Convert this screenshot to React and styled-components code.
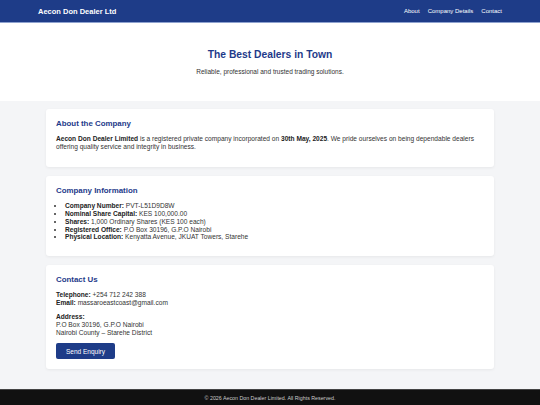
import React from "react";
import styled, { createGlobalStyle } from "styled-components";

const GlobalStyle = createGlobalStyle`
  * {
    box-sizing: border-box;
  }

  body {
    margin: 0;
    font-family: "Liberation Sans", Arial, sans-serif;
    background: #f4f5f7;
    color: #333333;
  }
`;

function App() {
  return (
    <>
      <GlobalStyle />
      <Page>
        <NavBar>
          <NavInner>
            <Brand>Aecon Don Dealer Ltd</Brand>
            <NavLinks>
              <NavLink href="#about">About</NavLink>
              <NavLink href="#details">Company Details</NavLink>
              <NavLink href="#contact">Contact</NavLink>
            </NavLinks>
          </NavInner>
        </NavBar>

        <Hero>
          <HeroTitle>The Best Dealers in Town</HeroTitle>
          <HeroText>Reliable, professional and trusted trading solutions.</HeroText>
        </Hero>

        <Main>
          <Card id="about">
            <CardTitle>About the Company</CardTitle>
            <Text>
              <b>Aecon Don Dealer Limited</b> is a registered private company
              incorporated on <b>30th May, 2025</b>. We pride ourselves on being
              dependable dealers offering quality service and integrity in
              business.
            </Text>
          </Card>

          <Card id="details">
            <CardTitle>Company Information</CardTitle>
            <InfoList>
              <li>
                <b>Company Number:</b> PVT-L51D9D8W
              </li>
              <li>
                <b>Nominal Share Capital:</b> KES 100,000.00
              </li>
              <li>
                <b>Shares:</b> 1,000 Ordinary Shares (KES 100 each)
              </li>
              <li>
                <b>Registered Office:</b> P.O Box 30196, G.P.O Nairobi
              </li>
              <li>
                <b>Physical Location:</b> Kenyatta Avenue, JKUAT Towers, Starehe
              </li>
            </InfoList>
          </Card>

          <Card id="contact">
            <CardTitle>Contact Us</CardTitle>
            <Text>
              <b>Telephone:</b> +254 712 242 388
              <br />
              <b>Email:</b> massaroeastcoast@gmail.com
            </Text>
            <Text>
              <b>Address:</b>
              <br />
              P.O Box 30196, G.P.O Nairobi
              <br />
              Nairobi County – Starehe District
            </Text>
            <Button>Send Enquiry</Button>
          </Card>
        </Main>

        <Footer>© 2026 Aecon Don Dealer Limited. All Rights Reserved.</Footer>
      </Page>
    </>
  );
}

const Page = styled.div`
  min-height: 100vh;
  display: flex;
  flex-direction: column;
`;

const NavBar = styled.header`
  background: #1e3c88;
  height: 23px;
  border-bottom: 1px solid #8ea2cf;
`;

const NavInner = styled.div`
  width: 464px;
  height: 100%;
  margin: 0 auto;
  display: flex;
  align-items: center;
  justify-content: space-between;
`;

const Brand = styled.div`
  color: #ffffff;
  font-size: 7.5px;
  font-weight: 700;
`;

const NavLinks = styled.nav`
  display: flex;
  gap: 8px;
`;

const NavLink = styled.a`
  color: #ffffff;
  font-size: 6px;
  text-decoration: none;
`;

const Hero = styled.section`
  background: #ffffff;
  height: 78px;
  display: flex;
  flex-direction: column;
  align-items: center;
  justify-content: center;
`;

const HeroTitle = styled.h1`
  margin: 0 0 8px;
  color: #1e3a8a;
  font-size: 10.3px;
  font-weight: 700;
`;

const HeroText = styled.p`
  margin: 0;
  font-size: 6.5px;
  color: #333333;
`;

const Main = styled.main`
  flex: 1;
  width: 448px;
  margin: 0 auto;
  padding: 8px 0 17px;
  display: flex;
  flex-direction: column;
  gap: 9px;
`;

const Card = styled.section`
  background: #ffffff;
  border-radius: 3px;
  box-shadow: 0 1px 3px rgba(0, 0, 0, 0.06);
  padding: 10px 10px 10px;
`;

const CardTitle = styled.h2`
  margin: 0 0 7px;
  color: #1e3a8a;
  font-size: 7.9px;
  font-weight: 700;
`;

const Text = styled.p`
  margin: 0 0 7px;
  font-size: 6.6px;
  line-height: 7.7px;

  b {
    color: #222222;
  }
`;

const InfoList = styled.ul`
  margin: 0 0 5px;
  padding-left: 9px;
  font-size: 6.6px;
  line-height: 7.7px;

  b {
    color: #222222;
  }
`;

const Button = styled.button`
  display: block;
  margin-top: 5px;
  background: #1e3c88;
  color: #ffffff;
  border: none;
  border-radius: 2px;
  font-family: inherit;
  font-size: 6.5px;
  width: 59px;
  height: 16px;
  cursor: pointer;
`;

const Footer = styled.footer`
  background: #111111;
  color: #cccccc;
  height: 16px;
  display: flex;
  align-items: center;
  justify-content: center;
  font-size: 5.3px;
  border-top: 1px solid #444444;
`;

export default App;
